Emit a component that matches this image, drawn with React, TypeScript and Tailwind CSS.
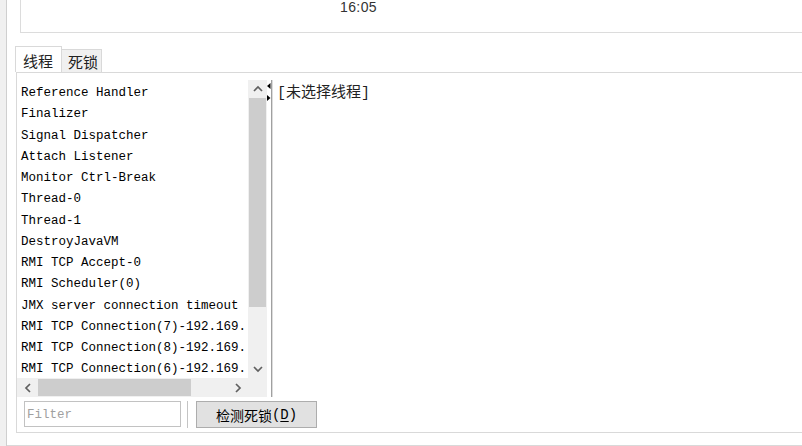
const threads = [
  "Reference Handler",
  "Finalizer",
  "Signal Dispatcher",
  "Attach Listener",
  "Monitor Ctrl-Break",
  "Thread-0",
  "Thread-1",
  "DestroyJavaVM",
  "RMI TCP Accept-0",
  "RMI Scheduler(0)",
  "JMX server connection timeout",
  "RMI TCP Connection(7)-192.169.",
  "RMI TCP Connection(8)-192.169.",
  "RMI TCP Connection(6)-192.169.",
];

const mono = { fontFamily: '"Liberation Mono", "Noto Sans CJK SC", monospace' };
const cjk = { fontFamily: '"Noto Sans CJK SC", "Liberation Sans", sans-serif' };

// small scrollbar chevron, rotated per direction
function Chevron({ dir }: { dir: "up" | "down" | "left" | "right" }) {
  const pts = {
    up: "1,6 5,2 9,6",
    down: "1,2 5,6 9,2",
    left: "6,1 2,5 6,9",
    right: "2,1 6,5 2,9",
  }[dir];
  const vertical = dir === "up" || dir === "down";
  return (
    <svg width={vertical ? 10 : 8} height={vertical ? 8 : 10} viewBox={vertical ? "0 0 10 8" : "0 0 8 10"}>
      <polyline points={pts} fill="none" stroke="#606060" strokeWidth="1.7" />
    </svg>
  );
}

export default function App() {
  return (
    <div className="flex h-[446px] w-[802px] overflow-hidden bg-white">
      {/* left window edge */}
      <div className="w-[7px] shrink-0 border-r border-[#cfcfcf] bg-[#f0f0f0]" />

      <div className="flex min-w-0 flex-1 flex-col">
        {/* top panel (partly scrolled off) */}
        <div className="h-[33px] shrink-0 pl-[13px]">
          <div className="h-full border-b border-l border-[#dcdcdc]">
            <div
              className="pl-[319px] text-[14px] leading-[14px] tracking-[0.4px] text-[#333]"
              style={{ fontFamily: '"Liberation Sans", Arial, sans-serif' }}
            >
              16:05
            </div>
          </div>
        </div>

        {/* tabs */}
        <div className="mt-[13px] flex h-[26px] shrink-0 items-end pl-[8px]" style={cjk}>
          <div className="flex h-[26px] w-[47px] items-start border-l border-r border-t border-[#d9d9d9] bg-white pl-[7px] pt-[6px] text-[15px] leading-[16px] text-[#222]">
            线程
          </div>
          <div className="flex h-[23px] w-[40px] items-start border-r border-t border-[#d9d9d9] bg-[#f0f0f0] pl-[6px] pt-[4px] text-[15px] leading-[16px] text-[#222]">
            死锁
          </div>
        </div>

        {/* tab content */}
        <div className="ml-[9px] flex h-[361px] shrink-0 flex-col border-b border-l border-t border-[#d9d9d9] pt-[7px]">
          <div className="flex h-[317px] shrink-0">
            {/* thread list */}
            <div className="flex w-[231px] shrink-0 flex-col">
              <div className="h-[298px] overflow-hidden whitespace-nowrap pl-[4px] pt-[3px] text-[12.5px] leading-[21.25px] text-black" style={mono}>
                {threads.map((t) => (
                  <div key={t}>{t}</div>
                ))}
              </div>
              <div className="flex h-[19px] shrink-0 bg-[#f0f0f0]">
                <div className="flex w-[21px] items-center justify-center">
                  <Chevron dir="left" />
                </div>
                <div className="my-[1px] w-[153px] bg-[#cdcdcd]" />
                <div className="flex-1" />
                <div className="flex w-[20px] items-center justify-center">
                  <Chevron dir="right" />
                </div>
              </div>
            </div>

            {/* vertical scrollbar + corner */}
            <div className="flex w-[19px] shrink-0 flex-col bg-[#f0f0f0]">
              <div className="flex h-[18px] items-center justify-center">
                <Chevron dir="up" />
              </div>
              <div className="mx-[1px] h-[209px] bg-[#cdcdcd]" />
              <div className="flex-1" />
              <div className="flex h-[18px] items-center justify-center">
                <Chevron dir="down" />
              </div>
              <div className="h-[19px]" />
            </div>

            {/* split divider */}
            <div className="flex w-[6px] shrink-0">
              <div className="flex w-[4px] flex-col pt-[3px]">
                <svg width="4" height="6" viewBox="0 0 4 6">
                  <polygon points="3.5,0 3.5,6 0,3" fill="#000" />
                </svg>
                <svg width="4" height="6" viewBox="0 0 4 6" className="mt-[6px]">
                  <polygon points="0,0 0,6 3.5,3" fill="#000" />
                </svg>
              </div>
              <div className="w-px bg-[#a0a0a0]" />
              <div className="w-px bg-[#dcdcdc]" />
            </div>

            {/* detail panel */}
            <div className="min-w-0 flex-1 pl-[4px] pt-[4px] text-[15px] leading-[20px] text-[#222]" style={mono}>
              [未选择线程]
            </div>
          </div>

          {/* filter + deadlock button */}
          <div className="flex h-[35px] shrink-0 items-start pl-[7px] pt-[4px]">
            <div className="flex h-[26px] w-[157px] items-center border border-[#c2c2c2] pl-[2px] pt-[3px] text-[12.5px] text-[#a0a0a0]" style={mono}>
              Filter
            </div>
            <div className="ml-[6px] h-[27px] w-px bg-[#c4c4c4]" />
            <div className="ml-[8px] flex h-[27px] w-[121px] items-center justify-center border border-[#adadad] bg-[#e1e1e1] pt-[1px] text-[14px] text-black" style={mono}>
              <span style={cjk}>检测死锁</span>(<span className="underline underline-offset-2">D</span>)
            </div>
          </div>
        </div>

        <div className="mt-[12px] flex-1 border-t border-[#d9d9d9]" />
      </div>
    </div>
  );
}
